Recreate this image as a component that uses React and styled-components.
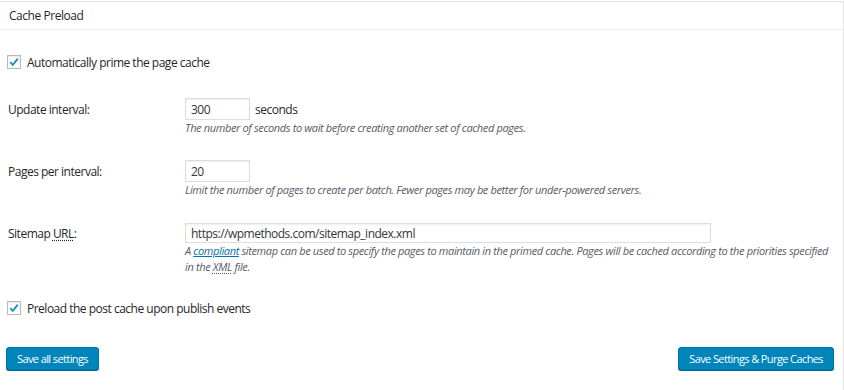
import React from "react";
import styled, { createGlobalStyle } from "styled-components";

const GlobalStyle = createGlobalStyle`
  html, body {
    margin: 0;
    padding: 0;
    background: #ffffff;
  }
  body {
    font-family: "Open Sans", "Liberation Sans", sans-serif;
    font-size: 12px;
    color: #23282d;
  }
`;

const Postbox = styled.div`
  width: 843px;
  height: 389px;
  margin-top: 1px;
  border-top: 1px solid #e5e5e5;
  border-right: 1px solid #e5e5e5;
  background: #fff;
`;

const Header = styled.h2`
  margin: 0;
  height: 27px;
  padding: 0 9px;
  display: flex;
  align-items: center;
  font-size: 12px;
  font-weight: 400;
  border-bottom: 1px solid #eeeeee;
  letter-spacing: -0.45px;
`;

const Inside = styled.div`
  padding: 0 7px 0 8px;
`;

const CheckRow = styled.label`
  display: flex;
  align-items: center;
  gap: 6px;
  height: 20px;
  margin-top: ${(p) => p.$top}px;
  margin-left: -1px;
  font-size: 12px;
  letter-spacing: -0.5px;
`;

const Box = styled.span`
  width: 12px;
  height: 12px;
  border: 1px solid #b4b9be;
  background: #fff;
  box-shadow: inset 0 1px 2px rgba(0, 0, 0, 0.1);
  display: flex;
  align-items: center;
  justify-content: center;
  flex: none;
`;

const FieldRow = styled.div`
  display: grid;
  grid-template-columns: 177px 1fr;
  margin-top: ${(p) => p.$top}px;
`;

const Label = styled.div`
  font-size: 12px;
  letter-spacing: -0.5px;
  height: ${(p) => p.$h || 22}px;
  display: flex;
  align-items: center;
`;

const Control = styled.div`
  display: flex;
  flex-direction: column;
`;

const InputLine = styled.div`
  display: flex;
  align-items: center;
  gap: 5px;
  font-size: 12px;
  letter-spacing: -0.5px;
`;

const TextInput = styled.div`
  box-sizing: border-box;
  width: ${(p) => p.$w}px;
  height: ${(p) => p.$h || 22}px;
  border: 1px solid #dddddd;
  box-shadow: inset 0 1px 2px rgba(0, 0, 0, 0.07);
  padding: 0 5px;
  display: flex;
  align-items: center;
  font-size: 12px;
  letter-spacing: -0.5px;
  color: #32373c;
`;

const Description = styled.p`
  margin: 0;
  font-size: 11px;
  font-style: italic;
  line-height: 16px;
  color: #555d66;
  letter-spacing: -0.36px;
  max-width: 645px;
`;

const Link = styled.a`
  color: #0073aa;
  text-decoration: underline;
`;

const Abbr = styled.abbr`
  text-decoration: underline dotted;
  text-underline-offset: 2px;
`;

const Actions = styled.div`
  display: flex;
  justify-content: space-between;
  padding: 0 9px 0 6px;
  margin-top: 29px;
`;

const Button = styled.button`
  height: 23px;
  padding: 0 10px;
  background: #0085ba;
  border: 1px solid #0073aa;
  border-radius: 3px;
  box-shadow: 0 1px 0 #006799;
  color: #fff;
  font-family: "Open Sans", "Liberation Sans", sans-serif;
  font-size: 11px;
  letter-spacing: -0.6px;
  cursor: pointer;
`;

function Check() {
  return (
    <Box>
      <svg width="12" height="12" viewBox="0 0 12 12">
        <path d="M2.2 6.2 L4.8 8.8 L9.8 2.6" fill="none" stroke="#1e8cbe" strokeWidth="1.8" />
      </svg>
    </Box>
  );
}

export default function App() {
  return (
    <>
      <GlobalStyle />
      <Postbox>
        <Header>Cache Preload</Header>
        <Inside>
          <CheckRow $top={22}>
            <Check />
            Automatically prime the page cache
          </CheckRow>

          <FieldRow $top={26}>
            <Label>Update interval:</Label>
            <Control>
              <InputLine>
                <TextInput $w={65}>300</TextInput>
                seconds
              </InputLine>
              <Description>The number of seconds to wait before creating another set of cached pages.</Description>
            </Control>
          </FieldRow>

          <FieldRow $top={24}>
            <Label>Pages per interval:</Label>
            <Control>
              <InputLine>
                <TextInput $w={65}>20</TextInput>
              </InputLine>
              <Description>
                Limit the number of pages to create per batch. Fewer pages may be better for under-powered servers.
              </Description>
            </Control>
          </FieldRow>

          <FieldRow $top={25}>
            <Label $h={20}>
              Sitemap&nbsp;<Abbr title="Uniform Resource Locator">URL</Abbr>:
            </Label>
            <Control>
              <InputLine>
                <TextInput $w={526} $h={20}>https://wpmethods.com/sitemap_index.xml</TextInput>
              </InputLine>
              <Description>
                A <Link href="#">compliant</Link> sitemap can be used to specify the pages to maintain in the
                primed cache. Pages will be cached according to the priorities specified in the{" "}
                <Abbr title="eXtensible Markup Language">XML</Abbr> file.
              </Description>
            </Control>
          </FieldRow>

          <CheckRow $top={23}>
            <Check />
            Preload the post cache upon publish events
          </CheckRow>
        </Inside>
        <Actions>
          <Button>Save all settings</Button>
          <Button>Save Settings &amp; Purge Caches</Button>
        </Actions>
      </Postbox>
    </>
  );
}
